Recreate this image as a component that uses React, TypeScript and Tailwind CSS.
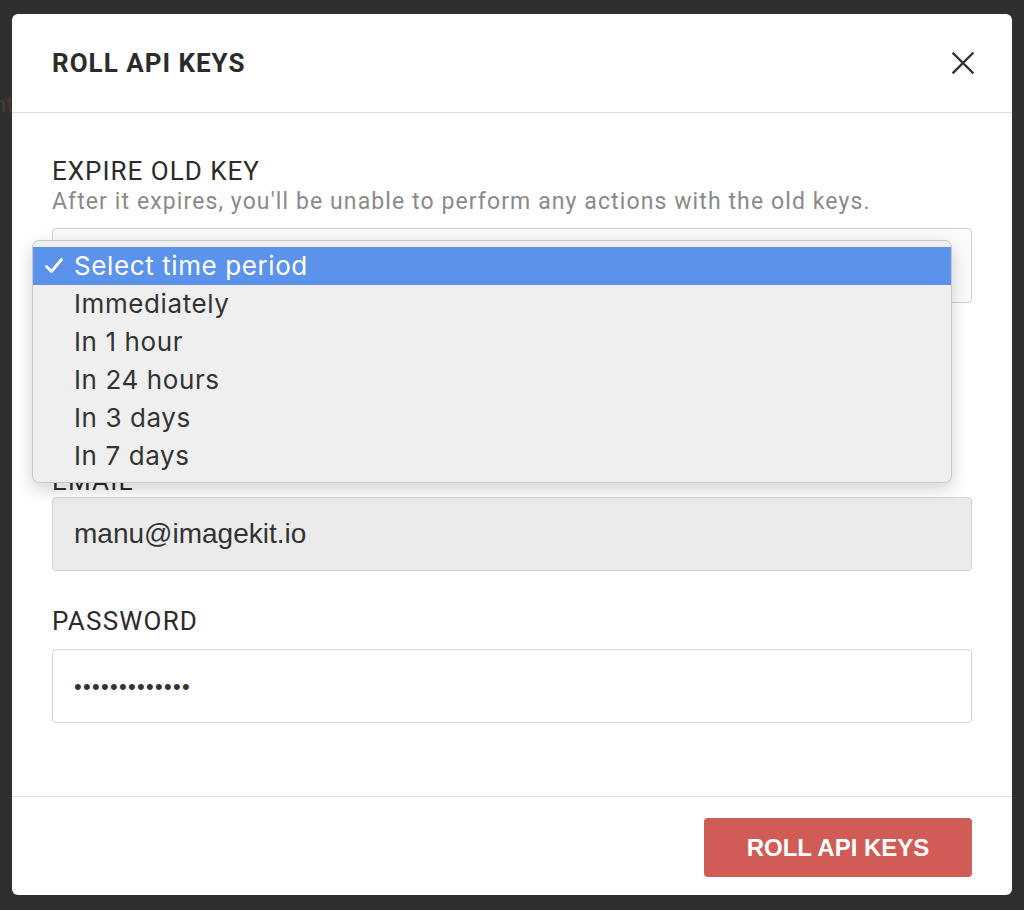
import React from 'react';

const options = ['Select time period', 'Immediately', 'In 1 hour', 'In 24 hours', 'In 3 days', 'In 7 days'];

function CloseIcon() {
    return (
        <svg width="22" height="22" viewBox="0 0 22 22" fill="none">
            <path d="M1.5 1.5 L20.5 20.5 M20.5 1.5 L1.5 20.5" stroke="#333" strokeWidth="2.4" strokeLinecap="square" />
        </svg>
    );
}

function CheckMark() {
    return (
        <svg width="20" height="18" viewBox="0 0 20 18" fill="none">
            <path d="M2.5 9.5 L7.5 14.5 L17.5 2.5" stroke="#fff" strokeWidth="2.8" strokeLinecap="round" strokeLinejoin="round" />
        </svg>
    );
}

function TimeDropdown() {
    return (
        <div className="absolute left-[-20px] top-[12px] w-[920px] h-[243px] bg-[#efefef] border border-[#c9c9c9] rounded-[7px] shadow-[0_6px_18px_rgba(0,0,0,0.18)] pt-[6px] z-10 font-['Inter',sans-serif] text-[26px] tracking-[0.6px] text-[#333]">
            {options.map((opt, i) => (
                <div
                    key={opt}
                    className={`h-[38px] flex items-center ${i === 0 ? 'bg-[#5b93ec] text-white' : ''}`}
                >
                    <div className="w-[41px] flex justify-end pr-[10px]">
                        {i === 0 && <CheckMark />}
                    </div>
                    <span className="leading-none">{opt}</span>
                </div>
            ))}
        </div>
    );
}

export default function App() {
    return (
        <div className="relative w-full h-[910px] bg-[#2f2f2f] overflow-hidden pt-[14px] pl-[12px]">
            {/* page behind the overlay */}
            <div className="absolute left-[-6px] top-[88px] text-[22px] text-[#4a3934] font-['Roboto',sans-serif]">nt</div>

            <div className="relative w-[1000px] h-[881px] bg-white rounded-[6px] flex flex-col">
                <div className="h-[99px] px-[40px] flex items-center justify-between border-b border-[#dcdcdc]">
                    <h2 className="font-['Roboto',sans-serif] font-bold text-[26px] text-[#2b2b2b] tracking-[1px]">ROLL API KEYS</h2>
                    <button className="mr-[-2px]">
                        <CloseIcon />
                    </button>
                </div>

                <div className="flex-1 px-[40px] pt-[43px] flex flex-col font-['Roboto',sans-serif]">
                    <div className="text-[26px] leading-[30px] tracking-[1px] text-[#2b2b2b]">EXPIRE OLD KEY</div>
                    <div className="mt-[3px] text-[23px] leading-[26px] tracking-[1.1px] text-[#8a8a8a]">
                        After it expires, you'll be unable to perform any actions with the old keys.
                    </div>
                    <div className="relative mt-[13px]">
                        <div className="h-[75px] bg-[#fbfbfb] border border-[#cfcfcf] rounded-[4px]" />
                        <TimeDropdown />
                    </div>

                    <div className="h-[163px]" />

                    <div className="text-[26px] leading-[30px] tracking-[1.2px] text-[#2b2b2b]">EMAIL</div>
                    <div className="mt-[1px] h-[74px] bg-[#ebebeb] border border-[#d3d3d3] rounded-[4px] flex items-center px-[21px] font-['Liberation_Sans',Arial,sans-serif] text-[28px] text-[#333]">
                        manu@imagekit.io
                    </div>

                    <div className="mt-[35px] text-[26px] leading-[30px] tracking-[1.2px] text-[#2b2b2b]">PASSWORD</div>
                    <div className="mt-[13px] h-[74px] bg-white border border-[#d3d3d3] rounded-[4px] flex items-center px-[21px] font-['Liberation_Sans',Arial,sans-serif] text-[22px] text-[#333] tracking-[1.3px]">
                        •••••••••••••
                    </div>
                </div>

                <div className="border-t border-[#dcdcdc] pt-[21px] pb-[18px] px-[40px] flex justify-end">
                    <button className="h-[59px] w-[268px] bg-[#d05c55] rounded-[4px] text-white font-['Liberation_Sans',Arial,sans-serif] font-bold text-[24px]">
                        ROLL API KEYS
                    </button>
                </div>
            </div>
        </div>
    );
}
